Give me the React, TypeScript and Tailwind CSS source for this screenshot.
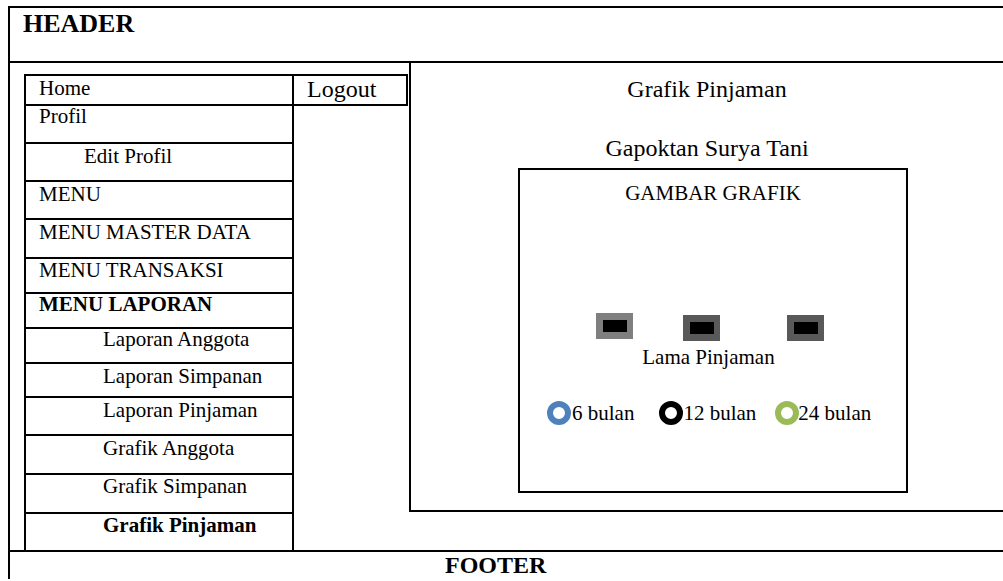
const menu = [
  { label: 'Home', h: 'h-[30px]', pt: 'pt-[2px]', pl: 'pl-[13px]', bold: false, border: true },
  { label: 'Profil', h: 'h-[38px]', pt: 'pt-0', pl: 'pl-[13px]', bold: false, border: true },
  { label: 'Edit Profil', h: 'h-[38px]', pt: 'pt-[2px]', pl: 'pl-[58px]', bold: false, border: true },
  { label: 'MENU', h: 'h-[38px]', pt: 'pt-[2px]', pl: 'pl-[13px]', bold: false, border: true },
  { label: 'MENU MASTER DATA', h: 'h-[39px]', pt: 'pt-[2px]', pl: 'pl-[13px]', bold: false, border: true },
  { label: 'MENU TRANSAKSI', h: 'h-[35px]', pt: 'pt-[1px]', pl: 'pl-[13px]', bold: false, border: true },
  { label: 'MENU LAPORAN', h: 'h-[35px]', pt: 'pt-0', pl: 'pl-[13px]', bold: true, border: true },
  { label: 'Laporan Anggota', h: 'h-[35px]', pt: 'pt-0', pl: 'pl-[77px]', bold: false, border: true },
  { label: 'Laporan Simpanan', h: 'h-[34px]', pt: 'pt-[2px]', pl: 'pl-[77px]', bold: false, border: true },
  { label: 'Laporan Pinjaman', h: 'h-[38px]', pt: 'pt-[2px]', pl: 'pl-[77px]', bold: false, border: true },
  { label: 'Grafik Anggota', h: 'h-[39px]', pt: 'pt-[2px]', pl: 'pl-[77px]', bold: false, border: true },
  { label: 'Grafik Simpanan', h: 'h-[39px]', pt: 'pt-[1px]', pl: 'pl-[77px]', bold: false, border: true },
  { label: 'Grafik Pinjaman', h: 'h-[36px]', pt: 'pt-[1px]', pl: 'pl-[77px]', bold: true, border: false },
];

function Bar({ light, top }: { light?: boolean; top?: boolean }) {
  return (
    <div
      className={`w-[37px] h-[26px] flex items-center justify-center ${light ? 'bg-[#7f7f7f]' : 'bg-[#595959]'} ${top ? '' : 'mt-[2px]'}`}
    >
      <div className="w-[24px] h-[12px] bg-black" />
    </div>
  );
}

function Ring({ color }: { color: string }) {
  return <div className={`w-[24px] h-[24px] rounded-full border-[6px] bg-white ${color}`} />;
}

export default function App() {
  return (
    <div className="min-h-[581px] bg-white pt-[6px] pl-[8px] text-black font-['Liberation_Serif',serif] overflow-hidden">
      <div className="border-l-2 border-t-2 border-black">
        {/* header */}
        <div className="h-[55px] border-b-2 border-black pl-[13px] pt-[1px]">
          <div className="text-[26px] leading-[30px] font-bold">HEADER</div>
        </div>

        {/* middle */}
        <div className="flex h-[487px]">
          <div className="flex items-start pl-[14px] pt-[11px] self-stretch">
            <div className="w-[270px] self-stretch border-l-2 border-r-2 border-t-2 border-black flex flex-col">
              {menu.map((m) => (
                <div
                  key={m.label}
                  className={`${m.h} ${m.pt} ${m.pl} shrink-0 ${m.border ? 'border-b-2 border-black' : ''} text-[21px] leading-[20px] whitespace-nowrap ${m.bold ? 'font-bold' : ''}`}
                >
                  {m.label}
                </div>
              ))}
            </div>
            <div className="w-[114px] h-[32px] border-t-2 border-r-2 border-b-2 border-black pl-[13px] pt-[1px] text-[24px] leading-[24px]">
              Logout
            </div>
          </div>

          <div className="flex-1 ml-[1px] h-[449px] border-l-2 border-b-2 border-black pt-[12px]">
            <div className="text-center text-[24px] leading-[28px]">Grafik Pinjaman</div>
            <div className="text-center text-[24px] leading-[28px] mt-[31px]">Gapoktan Surya Tani</div>
            <div className="ml-[107px] mt-[6px] w-[390px] h-[325px] border-2 border-black pt-[11px]">
              <div className="text-center text-[21px] leading-[24px]">GAMBAR GRAFIK</div>
              <div className="flex items-start mt-[108px] pl-[76px]">
                <Bar light top />
                <div className="ml-[50px]">
                  <Bar />
                </div>
                <div className="ml-[67px]">
                  <Bar />
                </div>
              </div>
              <div className="text-center text-[21px] leading-[24px] mt-[4px] pr-[9px]">Lama Pinjaman</div>
              <div className="flex items-center mt-[32px] pl-[27px] text-[21px] leading-[24px]">
                <Ring color="border-[#4f81bd]" />
                <span className="ml-[1px]">6 bulan</span>
                <div className="ml-[25px]">
                  <Ring color="border-black" />
                </div>
                <span>12 bulan</span>
                <div className="ml-[19px]">
                  <Ring color="border-[#9bbb59]" />
                </div>
                <span className="-ml-[1px]">24 bulan</span>
              </div>
            </div>
          </div>
        </div>

        {/* footer */}
        <div className="border-t-2 border-black h-[29px] pl-[435px]">
          <div className="text-[24px] leading-[26px] font-bold">FOOTER</div>
        </div>
      </div>
    </div>
  );
}
